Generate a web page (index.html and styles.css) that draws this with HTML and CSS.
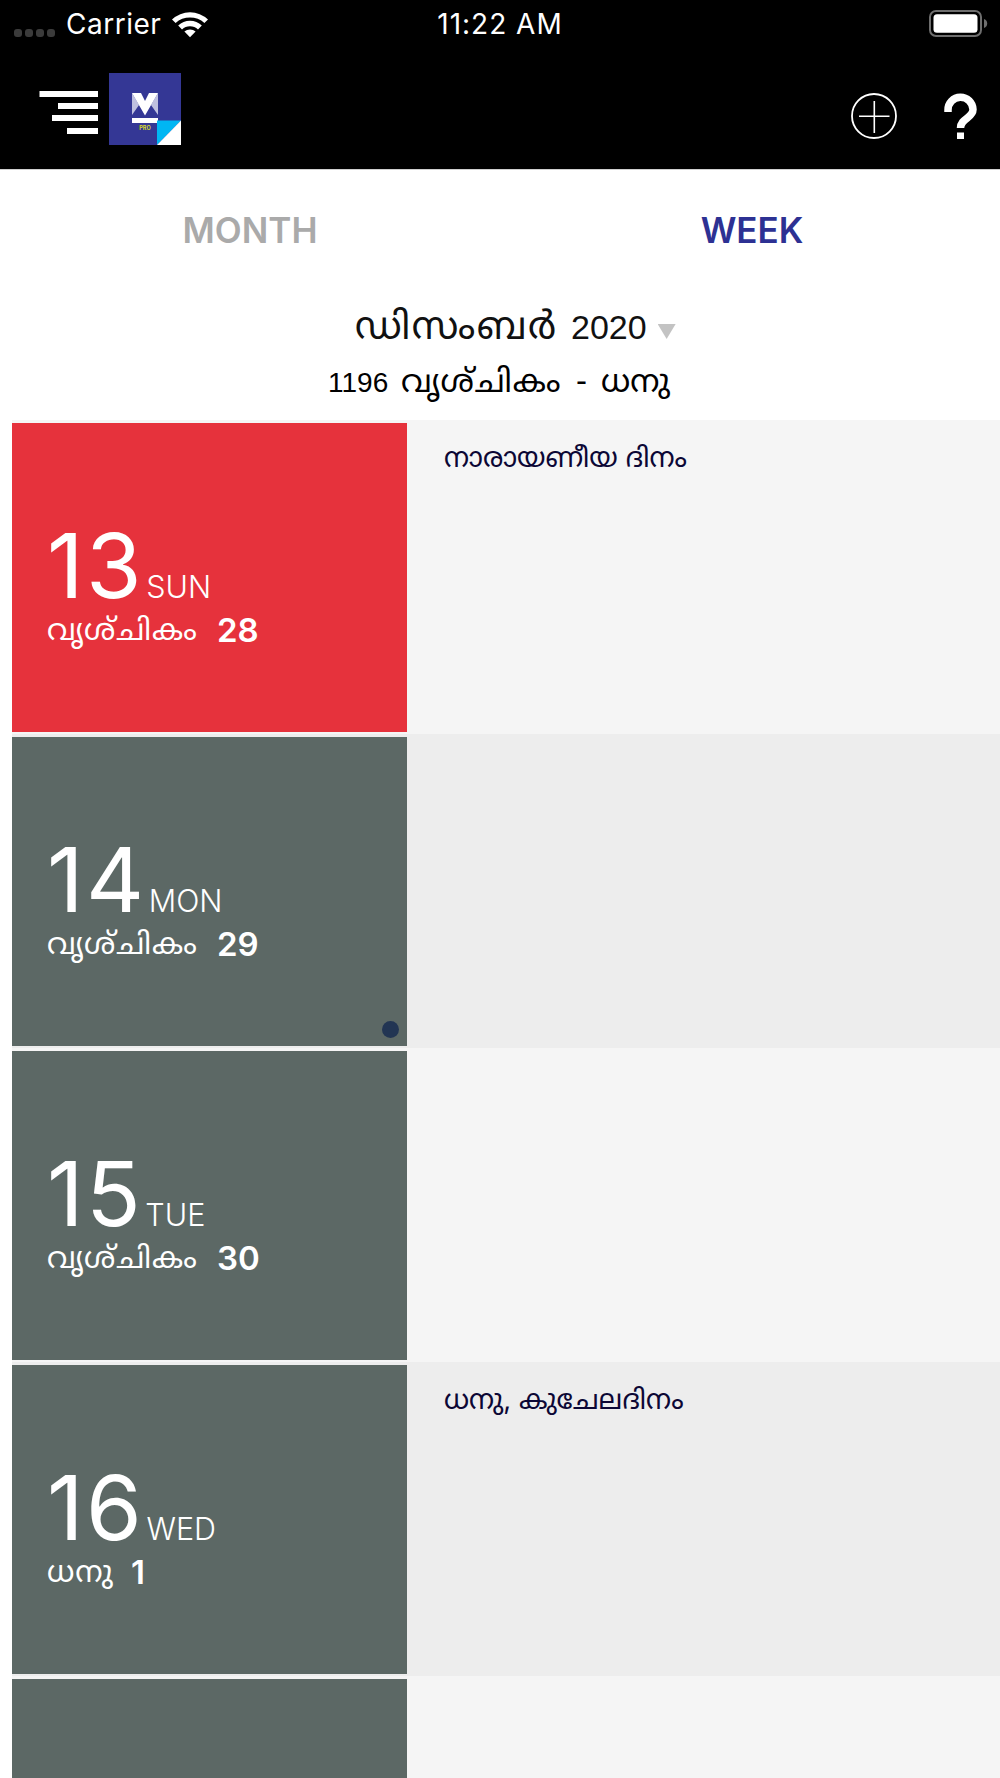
FILE: index.html
```html
<!DOCTYPE html>
<html lang="ml">

<head>
	<meta charset="UTF-8">
	<title>Calendar</title>
	<link rel="stylesheet" href="styles.css">
</head>

<body>
	<header class="top">
		<div class="status-bar">
			<div class="carrier">
				<span class="signal"><i></i><i></i><i></i><i></i></span>
				<span class="carrier-name">Carrier</span>
				<svg class="wifi" width="38" height="28" viewBox="0 0 38 28">
					<path d="M1 9.5A26 26 0 0 1 37 9.5L33.4 13.1A21 21 0 0 0 4.6 13.1Z" fill="#fff"/>
					<path d="M7.2 15.6A17 17 0 0 1 30.8 15.6L27 19.4A11.5 11.5 0 0 0 11 19.4Z" fill="#fff"/>
					<path d="M13.4 21.6A8.5 8.5 0 0 1 24.6 21.6L19 27.2Z" fill="#fff"/>
				</svg>
			</div>
			<span class="time">11:22 AM</span>
			<svg class="battery" width="60" height="28" viewBox="0 0 60 28">
				<rect x="2" y="1" width="51" height="25" rx="6" fill="none" stroke="#6e6e6e" stroke-width="2"/>
				<rect x="5.5" y="4.3" width="44" height="18.4" rx="3.5" fill="#fff"/>
				<path d="M56 9C60.3 10.5 60.3 16.5 56 18Z" fill="#6e6e6e"/>
			</svg>
		</div>
		<nav class="nav-bar">
			<svg class="menu" width="59" height="44" viewBox="0 0 59 44">
				<path d="M0.500 0H59V6H0.500ZM19 12H59V18H19ZM13 24H59V30H13ZM28 37H59V43H28Z" fill="#fff"/>
			</svg>
			<svg class="logo" width="72" height="72" viewBox="0 0 72 72">
				<rect width="72" height="72" fill="#343795"/>
				<path d="M23 20L30 32L23 42ZM49 20L42 32L49 42Z" fill="#bfc0df"/>
				<path d="M23 20H32L36 28L40 20H49L36 42.5Z" fill="#fff"/>
				<rect x="23" y="45" width="26" height="5" fill="#fff"/>
				<text class="logo-text" x="36" y="57" text-anchor="middle">PRO</text>
				<path d="M48 47.500H72L48 72Z" fill="#00b6f3"/>
				<path d="M72 47.500V72H48Z" fill="#fff"/>
			</svg>
			<svg class="add" width="46" height="46" viewBox="0 0 46 46">
				<circle cx="23" cy="23" r="22" fill="none" stroke="#fff" stroke-width="1.8"/>
				<path d="M8 23.3H38.5M23.3 8V40" stroke="#fff" stroke-width="1.6"/>
			</svg>
			<svg class="help" width="34" height="46" viewBox="0 0 34 46">
				<path d="M4 19V17A12.500 12.500 0 0 1 29 16.500C29 25 16.500 25.500 16.500 35" fill="none" stroke="#fff" stroke-width="7.5"/>
				<rect x="13" y="39.5" width="7" height="6.5" fill="#fff"/>
			</svg>
		</nav>
	</header>

	<div class="tabs">
		<div class="tab">MONTH</div>
		<div class="tab active">WEEK</div>
	</div>

	<div class="month">
		<span class="month-name">ഡിസംബർ</span>
		<span class="year">2020</span>
		<span class="arrow"></span>
	</div>
	<div class="ml-month">
		<span class="ml-year">1196</span>
		<span class="ml-first">വൃശ്&zwnj;ചികം</span>
		<span class="dash">-</span>
		<span class="ml-second">ധനു</span>
	</div>

	<main class="week">
		<div class="day">
			<div class="date sunday">
				<div class="num">13<small>SUN</small></div>
				<div class="ml-date"><span>വൃശ്&zwnj;ചികം</span><b>28</b></div>
			</div>
			<div class="event">നാരായണീയ ദിനം</div>
		</div>
		<div class="day">
			<div class="date">
				<div class="num">14<small>MON</small></div>
				<div class="ml-date"><span>വൃശ്&zwnj;ചികം</span><b>29</b></div>
				<i class="dot"></i>
			</div>
			<div class="event"></div>
		</div>
		<div class="day">
			<div class="date">
				<div class="num">15<small>TUE</small></div>
				<div class="ml-date"><span>വൃശ്&zwnj;ചികം</span><b>30</b></div>
			</div>
			<div class="event"></div>
		</div>
		<div class="day">
			<div class="date">
				<div class="num">16<small>WED</small></div>
				<div class="ml-date"><span class="short">ധനു</span><b>1</b></div>
			</div>
			<div class="event">ധനു, കുചേലദിനം</div>
		</div>
		<div class="day">
			<div class="date"></div>
			<div class="event"></div>
		</div>
	</main>
</body>

</html>
```
FILE: styles.css
```css
* {
	box-sizing: border-box;
}

body {
	margin: 0;
	height: 1778px;
	overflow: hidden;
	background-color: #fff;
	font-family: Inter, "Noto Sans Malayalam", sans-serif;
	display: flex;
	flex-direction: column;
}

/* header */
.top {
	height: 170px;
	flex-shrink: 0;
	background-color: #000;
	border-bottom: 1px solid #d0d0d0;
	color: #fff;
}

.status-bar {
	height: 48px;
	display: grid;
	grid-template-columns: 1fr auto 1fr;
	align-items: center;
	padding: 0 12px 0 14px;
}

.carrier {
	display: flex;
	align-items: center;
}

.signal {
	display: flex;
	gap: 3px;
	margin-top: 17px;
}

.signal i {
	width: 8px;
	height: 8px;
	border-radius: 3px;
	background-color: #3b3b3b;
}

.carrier-name,
.time {
	font-size: 28px;
	line-height: 48px;
}

.carrier-name {
	margin-left: 11px;
	letter-spacing: 0.5px;
}

.time {
	margin-right: 2px;
	letter-spacing: 1px;
}

.wifi {
	margin-left: 10px;
}

.battery {
	justify-self: end;
}

.nav-bar {
	height: 121px;
	display: flex;
	align-items: flex-start;
	padding: 25px 22px 0 39px;
}

.menu {
	margin-top: 18px;
}

.logo {
	margin-left: 11px;
}

.logo-text {
	font: bold 5.5px Inter, sans-serif;
	fill: #d8dc28;
}

.add {
	margin-left: auto;
	margin-top: 20px;
}

.help {
	margin-left: 47px;
	margin-top: 20px;
}

/* tabs */
.tabs {
	height: 120px;
	flex-shrink: 0;
	display: flex;
}

.tab {
	width: 50%;
	text-align: center;
	line-height: 120px;
	font-size: 35px;
	font-weight: 600;
	color: #aaa;
}

.tab.active {
	padding-left: 4px;
	color: #2d3193;
}

/* month titles */
.month,
.ml-month {
	flex-shrink: 0;
	display: flex;
	align-items: baseline;
	white-space: nowrap;
	font-family: "Liberation Sans", "Noto Sans Malayalam", sans-serif;
	color: #111;
}

.month {
	height: 64px;
	line-height: 72px;
	padding-left: 355px;
	font-size: 34px;
}

.month-name {
	width: 216px;
	font-size: 38px;
	letter-spacing: 1.5px;
}

.arrow {
	margin: 0 0 3px 11px;
	width: 18px;
	height: 15px;
	background-color: #c3c3c3;
	clip-path: polygon(0 0, 100% 0, 50% 100%);
}

.ml-month {
	height: 66px;
	line-height: 54px;
	padding-left: 328px;
	font-size: 28px;
	color: #000;
}

.ml-year {
	width: 73px;
}

.ml-first {
	width: 175px;
	letter-spacing: 1px;
}

.ml-first,
.ml-second {
	font-size: 32px;
}

.dash {
	width: 25px;
	font-size: 33px;
}

/* week list */
.week {
	flex: 1;
	min-height: 0;
	overflow: hidden;
	margin-left: 12px;
}

.day {
	height: 314px;
	display: flex;
	padding: 3px 0 2px;
	background-color: #f5f5f5;
}

.day:nth-child(even) {
	background-color: #ededed;
}

.date {
	position: relative;
	width: 395px;
	height: 309px;
	padding: 99px 0 0 35px;
	background-color: #5c6865;
	color: #fff;
}

.date.sunday {
	background-color: #e6323c;
}

.num {
	height: 88px;
	line-height: 88px;
	font-size: 90px;
	letter-spacing: 2.5px;
}

.num small {
	margin-left: 2px;
	font-size: 30.5px;
	font-weight: 350;
	letter-spacing: 0;
}

.ml-date {
	display: flex;
	align-items: flex-start;
	height: 40px;
	line-height: 40px;
	font-size: 30px;
	white-space: nowrap;
}

.ml-date span {
	width: 170px;
	margin-top: -1px;
	letter-spacing: 1px;
}

.ml-date span.short {
	width: 84px;
}

.ml-date b {
	font-size: 33px;
	font-weight: 600;
}

.dot {
	position: absolute;
	right: 8px;
	bottom: 8px;
	width: 17px;
	height: 17px;
	border-radius: 50%;
	background-color: #223553;
}

.event {
	padding: 14px 0 0 37px;
	font-size: 27.5px;
	line-height: 40px;
	color: #0c0735;
	white-space: nowrap;
}
```
